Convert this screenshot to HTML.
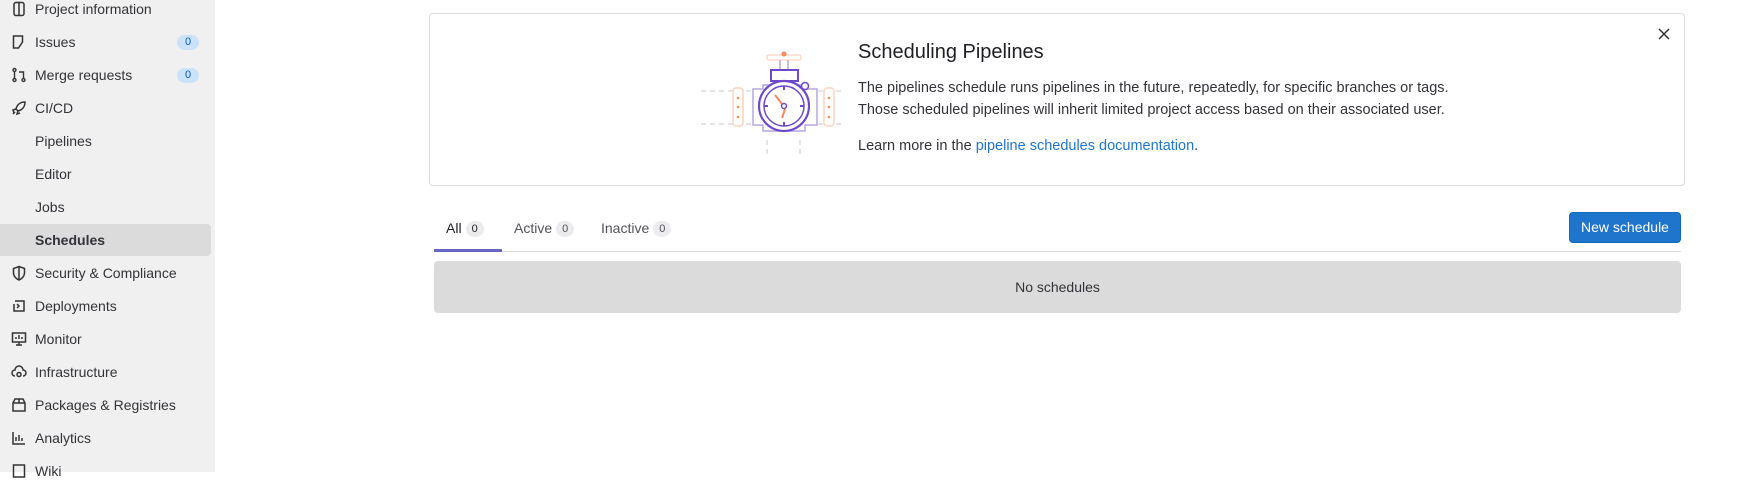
<!DOCTYPE html>
<html><head><meta charset="utf-8"><style>
*{box-sizing:border-box;margin:0;padding:0}
body{width:1743px;height:472px;overflow:hidden;background:#fff;font-family:"Liberation Sans",sans-serif;color:#333238;font-size:14px;position:relative}
.sb{position:absolute;left:0;top:0;width:215px;height:472px;background:#f0f0f0}
.it{position:absolute;left:0;height:32px;width:211px;line-height:32px;padding-left:35px;font-size:14px;color:#333238}
.it svg{position:absolute;left:11px;top:8px}
.sel{background:#dbdbdb;border-radius:0 4px 4px 0;font-weight:bold}
.bd{position:absolute;left:177px;top:9px;width:22px;height:15px;border-radius:8px;background:#cbe2f9;color:#0b5cad;font-size:11px;line-height:15px;text-align:center}
.card{position:absolute;left:429px;top:13px;width:1256px;height:173px;border:1px solid #dcdcde;border-radius:4px}
.a{color:#1f75cb}
.tab{position:absolute;top:218px;font-size:14px;line-height:20px}
.cnt{display:inline-block;background:#ececef;border-radius:8px;padding:0 6px;font-size:11px;line-height:16px;margin-left:4px;vertical-align:1px}
</style></head><body>
<div class="sb">
<div class="it" style="top:-7px"><svg width="16" height="16" viewBox="0 0 16 16" fill="none" stroke="#333" stroke-width="1.5"><rect x="3" y="1.5" width="10" height="13" rx="2"/><path d="M8 2v12"/></svg>Project information</div>
<div class="it" style="top:26px"><svg width="16" height="16" viewBox="0 0 16 16" fill="none" stroke="#333" stroke-width="1.5"><path d="M2.5 2h9v6l-4 6h-5z"/></svg>Issues<span class="bd">0</span></div>
<div class="it" style="top:59px"><svg width="16" height="16" viewBox="0 0 16 16" fill="none" stroke="#333" stroke-width="1.4"><circle cx="3.5" cy="3" r="1.5"/><circle cx="3.5" cy="13" r="1.5"/><circle cx="12.5" cy="13" r="1.5"/><path d="M3.5 4.5v7M12.5 11.5V5H8"/></svg>Merge requests<span class="bd">0</span></div>
<div class="it" style="top:92px"><svg width="16" height="16" viewBox="0 0 16 16" fill="none" stroke="#333" stroke-width="1.5"><path d="M14 2c-5 0-8 3-9 7l2 2c4-1 7-4 7-9zM5 9l-3 1 1 3M7 11l-1 3 3-1M2 14l2-2"/></svg>CI/CD</div>
<div class="it" style="top:125px">Pipelines</div>
<div class="it" style="top:158px">Editor</div>
<div class="it" style="top:191px">Jobs</div>
<div class="it sel" style="top:224px">Schedules</div>
<div class="it" style="top:257px"><svg width="16" height="16" viewBox="0 0 16 16" fill="none" stroke="#333" stroke-width="1.5"><path d="M8 1.5l5.5 2v4c0 4-3 6.5-5.5 7.5-2.5-1-5.5-3.5-5.5-7.5v-4zM8 2v12"/></svg>Security &amp; Compliance</div>
<div class="it" style="top:290px"><svg width="16" height="16" viewBox="0 0 16 16" fill="none" stroke="#333" stroke-width="1.5"><path d="M4 3h9v10H3V6M6 6l2 2-2 2"/></svg>Deployments</div>
<div class="it" style="top:323px"><svg width="16" height="16" viewBox="0 0 16 16" fill="none" stroke="#333" stroke-width="1.5"><rect x="1.5" y="2" width="13" height="9"/><path d="M5 14h6M8 11v3M5 8V6M8 8V4M11 8V6"/></svg>Monitor</div>
<div class="it" style="top:356px"><svg width="16" height="16" viewBox="0 0 16 16" fill="none" stroke="#333" stroke-width="1.5"><path d="M4 12a3 3 0 0 1 0-6 4 4 0 0 1 8 0 3 3 0 0 1 0 6"/><circle cx="8" cy="10.5" r="2"/></svg>Infrastructure</div>
<div class="it" style="top:389px"><svg width="16" height="16" viewBox="0 0 16 16" fill="none" stroke="#333" stroke-width="1.5"><path d="M2 6l2-4h8l2 4v8H2zM2 6h12M8 2v4"/></svg>Packages &amp; Registries</div>
<div class="it" style="top:422px"><svg width="16" height="16" viewBox="0 0 16 16" fill="none" stroke="#333" stroke-width="1.5"><path d="M2 2v12h12M5 11V7M8 11V5M11 11V8"/></svg>Analytics</div>
<div class="it" style="top:455px"><svg width="16" height="16" viewBox="0 0 16 16" fill="none" stroke="#333" stroke-width="1.5"><rect x="2.5" y="2" width="11" height="12"/></svg>Wiki</div>
</div>

<div class="card">
<svg style="position:absolute;left:271px;top:29px" width="140" height="120" viewBox="690 40 140 120">
<g stroke="#dcdcde" stroke-width="1.5" stroke-dasharray="5 4" fill="none"><path d="M690 88H830M690 121H830M756 137V152M789 137V152"/></g>
<path d="M742 86h10v-4h42v4h12v36h-12v6h-42v-6h-10z" fill="#fff" stroke="#b5a6e0" stroke-width="1.5"/>
<rect x="722" y="85" width="10" height="38" rx="3" fill="#fff" stroke="#fcd2c0" stroke-width="1.5"/>
<rect x="813" y="85" width="10" height="38" rx="3" fill="#fff" stroke="#fcd2c0" stroke-width="1.5"/>
<g fill="#f58a5c"><circle cx="727" cy="95" r="1.3"/><circle cx="727" cy="104" r="1.3"/><circle cx="727" cy="114" r="1.3"/><circle cx="818" cy="95" r="1.3"/><circle cx="818" cy="104" r="1.3"/><circle cx="818" cy="114" r="1.3"/></g>
<rect x="756" y="52" width="34" height="5" rx="2" fill="#fff" stroke="#fcd2c0" stroke-width="1.3"/>
<circle cx="773" cy="51" r="2.5" fill="#f58a5c"/>
<path d="M769 57v10M777 57v10" stroke="#b5a6e0" stroke-width="1.5"/>
<rect x="760" y="67" width="27" height="11" fill="#fff" stroke="#6e49cb" stroke-width="2"/>
<circle cx="794" cy="83" r="3.5" fill="#fff" stroke="#6e49cb" stroke-width="1.5"/>
<circle cx="773" cy="103" r="25" fill="#fff" stroke="#6e49cb" stroke-width="2.2"/>
<circle cx="773" cy="103" r="20" fill="#fff" stroke="#6e49cb" stroke-width="1.5"/>
<path d="M773 83v4M773 119v4M753 103h4M789 103h4" stroke="#6e49cb" stroke-width="2"/>
<path d="M771 101l-7-9M774 106l-3 9" stroke="#f58a5c" stroke-width="2"/>
<circle cx="773" cy="103" r="2.5" fill="#fff" stroke="#6e49cb" stroke-width="1.5"/>
</svg>
<div style="position:absolute;left:428px;top:27px;font-size:20px;color:#1f1e24">Scheduling Pipelines</div>
<div style="position:absolute;left:428px;top:63px;font-size:14.5px;line-height:22px">The pipelines schedule runs pipelines in the future, repeatedly, for specific branches or tags.<br>Those scheduled pipelines will inherit limited project access based on their associated user.</div>
<div style="position:absolute;left:428px;top:121px;font-size:14.5px;line-height:22px">Learn more in the <span class="a">pipeline schedules documentation</span>.</div>
<svg style="position:absolute;left:1227px;top:13px" width="14" height="14" viewBox="0 0 14 14" stroke="#333" stroke-width="1.5"><path d="M2 2l10 10M12 2L2 12"/></svg>
</div>

<div class="tab" style="left:446px;color:#1f1e24">All<span class="cnt">0</span></div>
<div class="tab" style="left:514px;color:#535158">Active<span class="cnt">0</span></div>
<div class="tab" style="left:601px;color:#535158">Inactive<span class="cnt">0</span></div>
<div style="position:absolute;left:434px;top:251px;width:1247px;height:1px;background:#dcdcde"></div>
<div style="position:absolute;left:434px;top:249px;width:68px;height:3px;background:#6666c4"></div>
<div style="position:absolute;left:1569px;top:212px;width:112px;height:31px;background:#1f75cb;border:1px solid #1068bf;border-radius:4px;color:#fff;font-size:14px;line-height:29px;text-align:center">New schedule</div>
<div style="position:absolute;left:434px;top:261px;width:1247px;height:52px;background:#dbdbdb;border-radius:4px;text-align:center;line-height:52px;font-size:14px;color:#333238">No schedules</div>
</body></html>
